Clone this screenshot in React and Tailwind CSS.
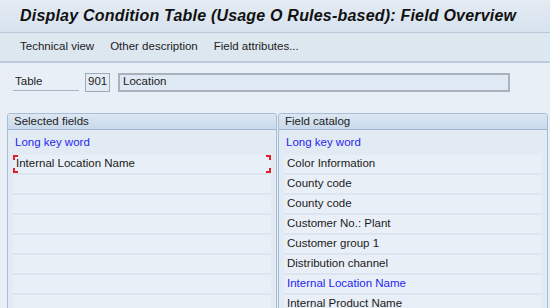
import React from "react";

const catalog = [
  { label: "Color Information" },
  { label: "County code" },
  { label: "County code" },
  { label: "Customer No.: Plant" },
  { label: "Customer group 1" },
  { label: "Distribution channel" },
  { label: "Internal Location Name", blue: true },
  { label: "Internal Product Name" },
];

function Corner({ pos }) {
  const map = {
    tl: "left-0 top-0 border-l-2 border-t-2",
    tr: "right-0 top-0 border-r-2 border-t-2",
    bl: "left-0 bottom-0 border-l-2 border-b-2",
    br: "right-0 bottom-0 border-r-2 border-b-2",
  };
  return <span className={`absolute w-[5px] h-[5px] border-[#e0202a] ${map[pos]}`} />;
}

function Panel({ title, children }) {
  return (
    <div className="flex-1 flex flex-col border border-[#a7bdd6] rounded-t-[3px] bg-[#e2ebf4] overflow-hidden">
      {/* header */}
      <div className="h-[16px] shrink-0 flex items-center pl-[6px] bg-gradient-to-b from-[#dce7f2] to-[#c9d9ea] border-b border-[#9fb6d0] text-[11.5px] text-[#222]">
        {title}
      </div>
      <div className="flex flex-col px-[5px] pt-[3px]">
        <div className="h-[22px] shrink-0 flex items-center pl-[2px] pb-[2px] text-[11.5px] text-[#2626f0]">Long key word</div>
        {children}
      </div>
    </div>
  );
}

function Row({ children, blue, selected }) {
  return (
    <div
      className={`relative h-[20px] shrink-0 flex items-center pl-[3px] bg-[#e9eff6] border-b-2 border-[#dde6f0] text-[11.5px] whitespace-nowrap ${
        blue ? "text-[#2626f0]" : "text-[#1a1a1a]"
      }`}
    >
      {children}
      {selected && (
        <>
          <Corner pos="tl" />
          <Corner pos="tr" />
          <Corner pos="bl" />
          <Corner pos="br" />
        </>
      )}
    </div>
  );
}

export default function App() {
  return (
    <div className="w-[550px] h-[308px] overflow-hidden bg-[#e9eff6] flex flex-col font-['Liberation_Sans',Arial,sans-serif]">
      {/* ── Title bar ── */}
      <div className="h-[33px] shrink-0 flex items-center pl-[20px] bg-gradient-to-b from-[#e3ebf3] to-[#d8e3ee] border-b border-[#b9c9da]">
        <h1 className="text-[16px] font-bold italic text-[#111] tracking-[0.2px] whitespace-nowrap">
          Display Condition Table (Usage O Rules-based): Field Overview
        </h1>
      </div>

      {/* ── Application toolbar ── */}
      <div className="h-[30px] shrink-0 flex items-center gap-[16px] pl-[20px] bg-[#dde7f0] border-b-2 border-[#bccadb] text-[11.5px] text-[#222]">
        <span>Technical view</span>
        <span>Other description</span>
        <span>Field attributes...</span>
      </div>

      {/* ── Table line ── */}
      <div className="h-[28px] shrink-0 flex items-center mt-[5px] text-[11.5px] text-[#222]">
        <div className="ml-[13px] w-[66px] h-[18px] flex items-end pl-[2px] border-b border-[#a7b3c0]">Table</div>
        <div className="ml-[6px] w-[25px] h-[19px] flex items-center pl-[2px] bg-[#e3ecf5] border border-[#a0a8b2]">901</div>
        <div className="ml-[8px] w-[392px] h-[19px] flex items-center pl-[3px] bg-[#dfe9f4] border-2 border-[#a9b2bc]">Location</div>
      </div>

      {/* ── Two panels ── */}
      <div className="flex-1 flex gap-[1px] pl-[7px] pr-[2px] mt-[17px]">
        <Panel title="Selected fields">
          <Row selected>Internal Location Name</Row>
          {Array.from({ length: 7 }).map((_, i) => (
            <Row key={i}>&nbsp;</Row>
          ))}
        </Panel>
        <Panel title="Field catalog">
          {catalog.map((c, i) => (
            <Row key={i} blue={c.blue}>
              {c.label}
            </Row>
          ))}
        </Panel>
      </div>
    </div>
  );
}
